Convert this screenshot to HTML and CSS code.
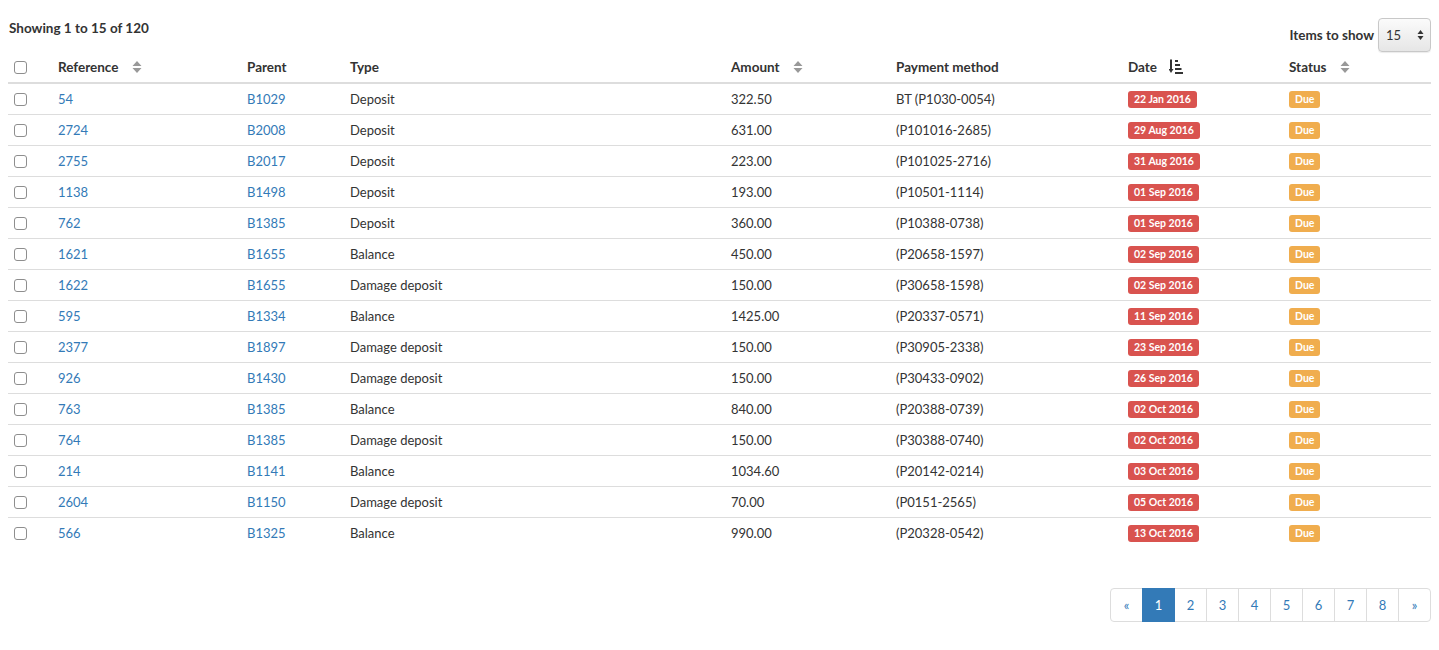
FILE: index.html
```html
<!DOCTYPE html>
<html>
<head>
<meta charset="utf-8">
<link rel="stylesheet" href="styles.css">
</head>
<body>
<div class="topbar">
  <div class="showing">Showing 1 to 15 of 120</div>
  <div class="items">
    <span class="items-label">Items to show</span>
    <div class="select"><span class="select-val">15</span><svg class="select-arrows" width="7" height="12" viewBox="0 0 7 12"><path d="M3.5 1 L6.5 5 H0.5 Z M3.5 11 L6.5 7 H0.5 Z" fill="#333"/></svg></div>
  </div>
</div>
<table class="grid">
  <colgroup>
    <col class="c-check"><col class="c-ref"><col class="c-parent"><col class="c-type"><col class="c-amount"><col class="c-pay"><col class="c-date"><col class="c-status">
  </colgroup>
  <thead>
    <tr>
      <th><input type="checkbox" class="cb"></th>
      <th>Reference <svg class="sort" width="10" height="14" viewBox="0 0 10 14"><path d="M5 1 L9.5 6 H0.5 Z M5 13 L9.5 8 H0.5 Z" fill="#999"/></svg></th>
      <th>Parent</th>
      <th>Type</th>
      <th>Amount <svg class="sort" width="10" height="14" viewBox="0 0 10 14"><path d="M5 1 L9.5 6 H0.5 Z M5 13 L9.5 8 H0.5 Z" fill="#999"/></svg></th>
      <th>Payment method</th>
      <th>Date <svg class="sort sort-date" width="14" height="15" viewBox="0 0 14 15"><path d="M2 0.5 V11" stroke="#333" stroke-width="2"/><path d="M-0.5 10 H4.5 L2 14 Z" fill="#333"/><rect x="6" y="1" width="3" height="2" fill="#333"/><rect x="6" y="5" width="5" height="2" fill="#333"/><rect x="6" y="9" width="6.5" height="2" fill="#333"/><rect x="6" y="13" width="8" height="2" fill="#333"/></svg></th>
      <th>Status <svg class="sort" width="10" height="14" viewBox="0 0 10 14"><path d="M5 1 L9.5 6 H0.5 Z M5 13 L9.5 8 H0.5 Z" fill="#999"/></svg></th>
    </tr>
  </thead>
  <tbody>
    <tr><td><input type="checkbox" class="cb"></td><td><a href="#">54</a></td><td><a href="#">B1029</a></td><td>Deposit</td><td>322.50</td><td>BT (P1030-0054)</td><td><span class="label label-danger">22 Jan 2016</span></td><td><span class="label label-warning">Due</span></td></tr>
    <tr><td><input type="checkbox" class="cb"></td><td><a href="#">2724</a></td><td><a href="#">B2008</a></td><td>Deposit</td><td>631.00</td><td>(P101016-2685)</td><td><span class="label label-danger">29 Aug 2016</span></td><td><span class="label label-warning">Due</span></td></tr>
    <tr><td><input type="checkbox" class="cb"></td><td><a href="#">2755</a></td><td><a href="#">B2017</a></td><td>Deposit</td><td>223.00</td><td>(P101025-2716)</td><td><span class="label label-danger">31 Aug 2016</span></td><td><span class="label label-warning">Due</span></td></tr>
    <tr><td><input type="checkbox" class="cb"></td><td><a href="#">1138</a></td><td><a href="#">B1498</a></td><td>Deposit</td><td>193.00</td><td>(P10501-1114)</td><td><span class="label label-danger">01 Sep 2016</span></td><td><span class="label label-warning">Due</span></td></tr>
    <tr><td><input type="checkbox" class="cb"></td><td><a href="#">762</a></td><td><a href="#">B1385</a></td><td>Deposit</td><td>360.00</td><td>(P10388-0738)</td><td><span class="label label-danger">01 Sep 2016</span></td><td><span class="label label-warning">Due</span></td></tr>
    <tr><td><input type="checkbox" class="cb"></td><td><a href="#">1621</a></td><td><a href="#">B1655</a></td><td>Balance</td><td>450.00</td><td>(P20658-1597)</td><td><span class="label label-danger">02 Sep 2016</span></td><td><span class="label label-warning">Due</span></td></tr>
    <tr><td><input type="checkbox" class="cb"></td><td><a href="#">1622</a></td><td><a href="#">B1655</a></td><td>Damage deposit</td><td>150.00</td><td>(P30658-1598)</td><td><span class="label label-danger">02 Sep 2016</span></td><td><span class="label label-warning">Due</span></td></tr>
    <tr><td><input type="checkbox" class="cb"></td><td><a href="#">595</a></td><td><a href="#">B1334</a></td><td>Balance</td><td>1425.00</td><td>(P20337-0571)</td><td><span class="label label-danger">11 Sep 2016</span></td><td><span class="label label-warning">Due</span></td></tr>
    <tr><td><input type="checkbox" class="cb"></td><td><a href="#">2377</a></td><td><a href="#">B1897</a></td><td>Damage deposit</td><td>150.00</td><td>(P30905-2338)</td><td><span class="label label-danger">23 Sep 2016</span></td><td><span class="label label-warning">Due</span></td></tr>
    <tr><td><input type="checkbox" class="cb"></td><td><a href="#">926</a></td><td><a href="#">B1430</a></td><td>Damage deposit</td><td>150.00</td><td>(P30433-0902)</td><td><span class="label label-danger">26 Sep 2016</span></td><td><span class="label label-warning">Due</span></td></tr>
    <tr><td><input type="checkbox" class="cb"></td><td><a href="#">763</a></td><td><a href="#">B1385</a></td><td>Balance</td><td>840.00</td><td>(P20388-0739)</td><td><span class="label label-danger">02 Oct 2016</span></td><td><span class="label label-warning">Due</span></td></tr>
    <tr><td><input type="checkbox" class="cb"></td><td><a href="#">764</a></td><td><a href="#">B1385</a></td><td>Damage deposit</td><td>150.00</td><td>(P30388-0740)</td><td><span class="label label-danger">02 Oct 2016</span></td><td><span class="label label-warning">Due</span></td></tr>
    <tr><td><input type="checkbox" class="cb"></td><td><a href="#">214</a></td><td><a href="#">B1141</a></td><td>Balance</td><td>1034.60</td><td>(P20142-0214)</td><td><span class="label label-danger">03 Oct 2016</span></td><td><span class="label label-warning">Due</span></td></tr>
    <tr><td><input type="checkbox" class="cb"></td><td><a href="#">2604</a></td><td><a href="#">B1150</a></td><td>Damage deposit</td><td>70.00</td><td>(P0151-2565)</td><td><span class="label label-danger">05 Oct 2016</span></td><td><span class="label label-warning">Due</span></td></tr>
    <tr><td><input type="checkbox" class="cb"></td><td><a href="#">566</a></td><td><a href="#">B1325</a></td><td>Balance</td><td>990.00</td><td>(P20328-0542)</td><td><span class="label label-danger">13 Oct 2016</span></td><td><span class="label label-warning">Due</span></td></tr>
  </tbody>
</table>
<div class="pager-wrap">
  <ul class="pagination">
    <li><a href="#">«</a></li>
    <li class="active"><a href="#">1</a></li>
    <li><a href="#">2</a></li>
    <li><a href="#">3</a></li>
    <li><a href="#">4</a></li>
    <li><a href="#">5</a></li>
    <li><a href="#">6</a></li>
    <li><a href="#">7</a></li>
    <li><a href="#">8</a></li>
    <li><a href="#">»</a></li>
  </ul>
</div>
</body>
</html>
```
FILE: styles.css
```css
html, body { background: #fff; }
body {
  margin: 8px;
  font-family: "Lato", "Liberation Sans", sans-serif;
  font-size: 13px;
  line-height: 18px;
  color: #333;
}
a { color: #337ab7; text-decoration: none; }

.topbar {
  display: flex;
  justify-content: space-between;
  align-items: flex-start;
  padding-top: 10px;
}
.showing { font-weight: 700; font-size: 13.5px; margin-top: 1px; margin-left: 1px; }
.items { display: flex; align-items: center; gap: 4px; }
.items-label { font-weight: 700; font-size: 13.5px; }
.select {
  width: 53px;
  height: 34px;
  box-sizing: border-box;
  border: 1px solid #c8c8c8;
  border-radius: 4px;
  background: linear-gradient(#fbfbfb, #e6e6e6);
  display: flex;
  align-items: center;
  justify-content: space-between;
  padding: 0 6px 0 7px;
  box-shadow: 0 1px 1px rgba(0,0,0,0.08);
}
.select-val { font-weight: 400; }

.grid {
  width: 100%;
  border-collapse: collapse;
  table-layout: fixed;
}
.c-check { width: 44px; }
.c-ref { width: 189px; }
.c-parent { width: 103px; }
.c-type { width: 381px; }
.c-amount { width: 165px; }
.c-pay { width: 232px; }
.c-date { width: 161px; }
.c-status { width: auto; }

.grid th, .grid td {
  padding: 6px;
  height: 18px;
  text-align: left;
  vertical-align: middle;
  white-space: nowrap;
  line-height: 18px;
}
.grid th { font-weight: 700; font-size: 13.5px; border-bottom: 2px solid #ddd; }
.grid tbody tr + tr td { border-top: 1px solid #ddd; }

.sort { vertical-align: -2px; margin-left: 10px; }
.sort-date { margin-left: 9px; vertical-align: -2px; }

.cb {
  appearance: none;
  -webkit-appearance: none;
  width: 13px;
  height: 13px;
  margin: 0;
  border: 1px solid #8e8e8e;
  border-radius: 3px;
  background: #fff;
  display: block;
}

.label {
  display: inline-block;
  color: #fff;
  font-size: 10.5px;
  font-weight: 700;
  line-height: 10.5px;
  padding: 3px 6px 3.5px;
  border-radius: 3px;
  vertical-align: top;
  margin-top: 1px;
}
.label-danger { background: #d9534f; }
.label-warning { background: #f0ad4e; }

.pager-wrap { display: flex; justify-content: flex-end; margin-top: 40px; }
.pagination {
  display: flex;
  list-style: none;
  margin: 0;
  padding: 0;
}
.pagination a {
  display: block;
  width: 33px;
  box-sizing: border-box;
  text-align: center;
  padding: 7px 0;
  line-height: 18px;
  border: 1px solid #ddd;
  margin-left: -1px;
  background: #fff;
}
.pagination li:first-child a { border-radius: 4px 0 0 4px; margin-left: 0; }
.pagination li:last-child a { border-radius: 0 4px 4px 0; }
.pagination li.active a { background: #337ab7; border-color: #337ab7; color: #fff; position: relative; z-index: 1; }
```
